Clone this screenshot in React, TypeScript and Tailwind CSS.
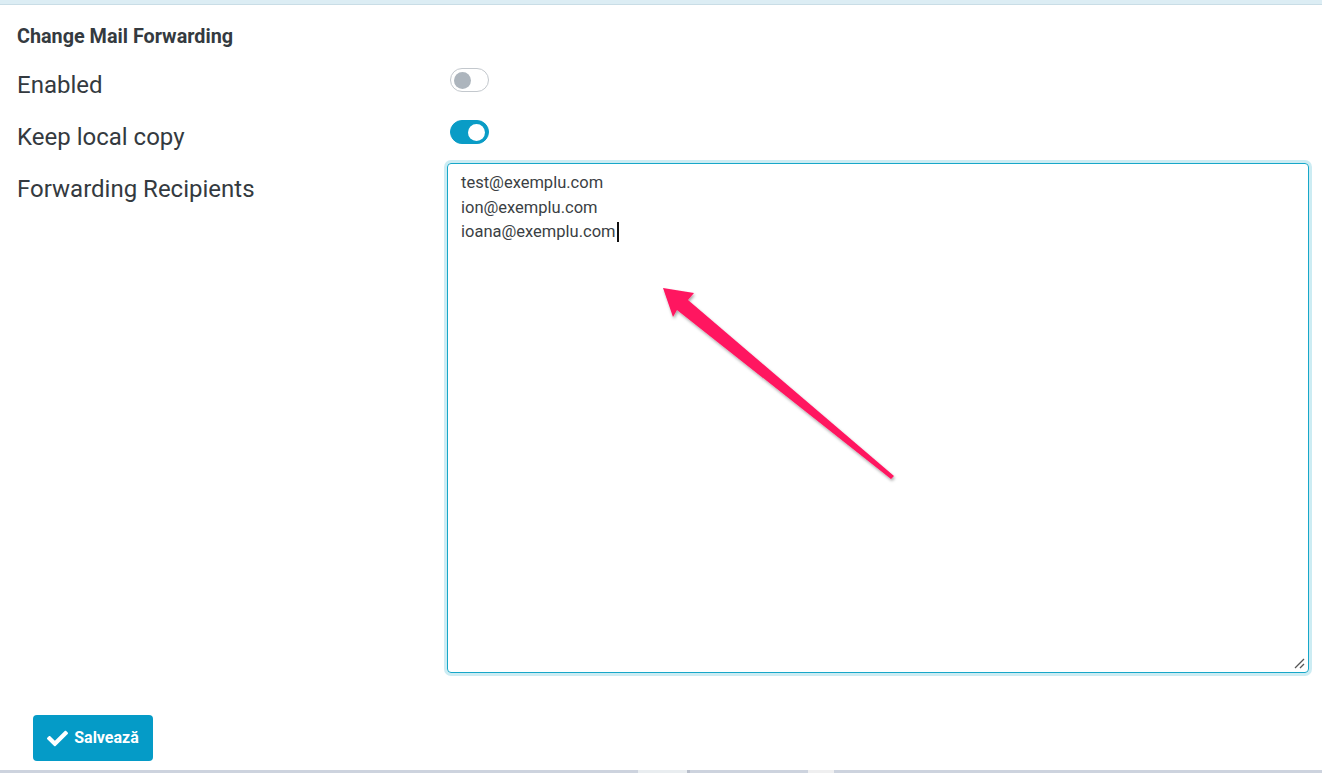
import { FaCheck } from "react-icons/fa";

function Toggle({ on }: { on: boolean }) {
  return (
    <div
      className={
        on
          ? "flex h-[24px] w-[39px] items-center justify-end rounded-full border border-[#0a9cc6] bg-[#0a9cc6] px-[3px]"
          : "flex h-[24px] w-[39px] items-center justify-start rounded-full border border-[#c3c8cd] bg-white px-[3px]"
      }
    >
      <span
        className={
          on
            ? "block size-[17px] rounded-full bg-white"
            : "block size-[17px] rounded-full bg-[#adb5bd]"
        }
      />
    </div>
  );
}

export default function App() {
  const rows = [
    { label: "Enabled", on: false },
    { label: "Keep local copy", on: true },
  ];

  return (
    <div
      className="relative h-[773px] w-full overflow-hidden bg-white text-[#343a40]"
      style={{ fontFamily: "Roboto, 'Liberation Sans', sans-serif" }}
    >
      {/* top strip */}
      <div className="h-[5px] border-b border-[#c9dde6] bg-[#dcedf4]" />

      <div className="pl-[17px] pr-[13px] pt-[19px]">
        <h2 className="text-[19.8px] font-bold leading-[25px] text-[#343a40]">
          Change Mail Forwarding
        </h2>

        <div className="mt-[11px] flex flex-col">
          {rows.map((r) => (
            <div key={r.label} className="flex h-[52px] items-start">
              <div className="w-[433px] pt-[11px] text-[24px] leading-[28px]">
                {r.label}
              </div>
              <div className="pt-[8px]">
                <Toggle on={r.on} />
              </div>
            </div>
          ))}

          <div className="flex items-start">
            <div className="w-[430px] pt-[11px] text-[24px] leading-[28px]">
              Forwarding Recipients
            </div>
            <div className="-mt-[1px] flex-1">
              <div className="relative h-[510px] w-full rounded-[4px] border border-[#17a7c9] px-[13px] py-[7px] text-[16.5px] leading-[24.5px] text-[#3b3f44] shadow-[0_0_0_3px_rgba(23,167,201,0.22)]">
                <div>test@exemplu.com</div>
                <div>ion@exemplu.com</div>
                <div className="flex items-center">
                  ioana@exemplu.com
                  <span className="ml-[1px] inline-block h-[20px] w-[2px] bg-[#111]" />
                </div>
                <svg
                  className="absolute bottom-[3px] right-[3px]"
                  width="12"
                  height="12"
                  viewBox="0 0 12 12"
                >
                  <path d="M11 2 L2 11 M11 7 L7 11" stroke="#555" strokeWidth="1.3" />
                </svg>
              </div>
            </div>
          </div>
        </div>

        <div className="mt-[42px] pl-[16px]">
          <button className="flex h-[46px] w-[120px] items-center justify-center gap-[6px] rounded-[4px] bg-[#059bc7] text-[16px] font-bold text-white">
            <FaCheck size={21} />
            Salvează
          </button>
        </div>
      </div>

      {/* bottom edge */}
      <div className="absolute bottom-0 left-0 flex h-[3px] w-full">
        <div className="w-[638px] bg-[#cdd3de]" />
        <div className="w-[49px] bg-[#e9edf0]" />
        <div className="w-[3px] bg-[#b9bfcb]" />
        <div className="w-[118px] bg-[#cdd3de]" />
        <div className="w-[26px] bg-[#efeff0]" />
        <div className="flex-1 bg-[#cdd3de]" />
      </div>

      {/* annotation arrow */}
      <svg className="pointer-events-none absolute left-0 top-0" width="1322" height="773">
        <defs>
          <filter id="sh" x="-20%" y="-20%" width="140%" height="140%">
            <feDropShadow dx="1" dy="2" stdDeviation="1.5" floodColor="#000" floodOpacity="0.35" />
          </filter>
        </defs>
        <path
          d="M663 288 L694 293 L688 300 L894 476 L891 479 L677 310 L673 317 Z"
          fill="#ff1660"
          filter="url(#sh)"
        />
      </svg>
    </div>
  );
}
